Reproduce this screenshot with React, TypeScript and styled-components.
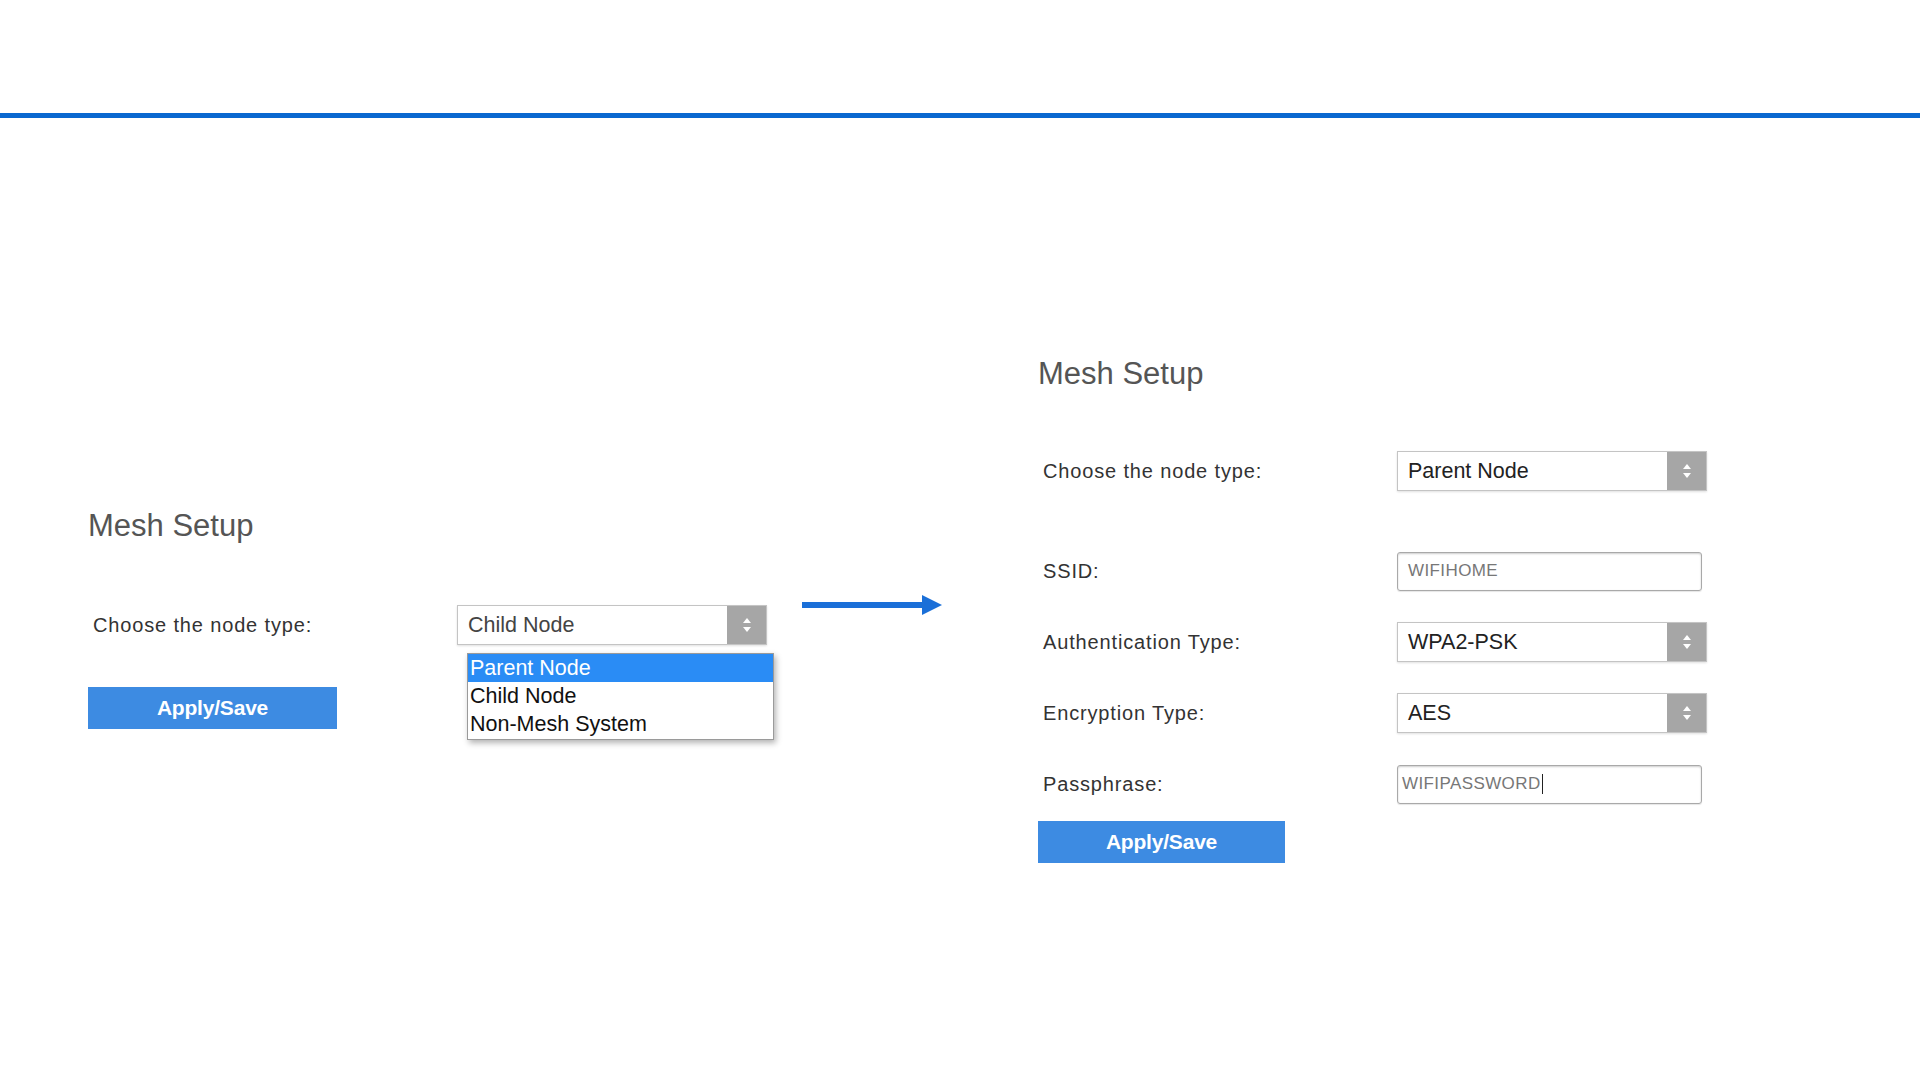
import React from 'react';
import styled, { createGlobalStyle } from 'styled-components';

const GlobalStyle = createGlobalStyle`
    html, body {
        margin: 0;
        padding: 0;
        background: #ffffff;
        font-family: "Liberation Sans", Arial, sans-serif;
    }
`;

const Page = styled.div`
    width: 1920px;
    height: 1080px;
    overflow: hidden;
    background: #ffffff;
`;

const TopBar = styled.div`
    height: 113px;
    border-bottom: 5px solid #0a68d0;
`;

const Content = styled.div`
    display: flex;
    align-items: flex-start;
`;

const Panel = styled.div<{ $top: number; $left: number; $labelWidth: number }>`
    display: flex;
    flex-direction: column;
    padding-top: ${({ $top }) => $top}px;
    margin-left: ${({ $left }) => $left}px;
    --label-width: ${({ $labelWidth }) => $labelWidth}px;
`;

const Heading = styled.h2`
    margin: 0;
    font-size: 31px;
    line-height: 34px;
    font-weight: normal;
    color: #555555;
`;

const Row = styled.div<{ $gap: number }>`
    display: flex;
    align-items: center;
    height: 40px;
    margin-top: ${({ $gap }) => $gap}px;
`;

const Label = styled.div`
    width: var(--label-width);
    box-sizing: border-box;
    padding-left: 5px;
    font-size: 20px;
    letter-spacing: 0.85px;
    color: #333333;
`;

const SelectWrap = styled.div`
    position: relative;
`;

const SelectBox = styled.div`
    display: flex;
    align-items: stretch;
    width: 310px;
    height: 40px;
    box-sizing: border-box;
    border: 1px solid #c4c4c4;
    background: #ffffff;
    box-shadow: 0 1px 2px rgba(0, 0, 0, 0.12);
`;

const SelectText = styled.div<{ $dim?: boolean }>`
    flex: 1;
    display: flex;
    align-items: center;
    padding-left: 10px;
    font-size: 21.5px;
    color: ${({ $dim }) => ($dim ? '#444444' : '#222222')};
`;

const SpinButton = styled.div`
    width: 39px;
    background: #a6a6a6;
    display: flex;
    align-items: center;
    justify-content: center;
`;

const OptionList = styled.div`
    position: absolute;
    left: 10px;
    top: 48px;
    width: 307px;
    box-sizing: border-box;
    border: 1px solid #9a9a9a;
    background: #ffffff;
    box-shadow: 2px 3px 6px rgba(0, 0, 0, 0.3);
    padding: 0 0 1px;
`;

const Option = styled.div<{ $active?: boolean }>`
    height: 28px;
    line-height: 28px;
    padding-left: 2px;
    font-size: 21.5px;
    color: ${({ $active }) => ($active ? '#ffffff' : '#111111')};
    background: ${({ $active }) => ($active ? '#2a8cf5' : 'transparent')};
`;

const TextField = styled.div<{ $tight?: boolean }>`
    display: flex;
    align-items: center;
    width: 305px;
    height: 39px;
    box-sizing: border-box;
    border: 1px solid #a9a9a9;
    border-radius: 3px;
    box-shadow: inset 0 1px 2px rgba(0, 0, 0, 0.2), 0 1px 1px rgba(0, 0, 0, 0.1);
    padding-left: ${({ $tight }) => ($tight ? 4 : 10)}px;
    font-size: 17px;
    color: #777777;
    letter-spacing: 0.4px;
`;

const Caret = styled.span`
    display: inline-block;
    width: 1px;
    height: 20px;
    background: #222222;
    margin-left: 1px;
`;

const ApplyButton = styled.button<{ $gap: number; $width: number }>`
    margin-top: ${({ $gap }) => $gap}px;
    width: ${({ $width }) => $width}px;
    height: 42px;
    border: none;
    background: #3d8be2;
    color: #ffffff;
    font-family: "Liberation Sans", Arial, sans-serif;
    font-size: 21px;
    font-weight: bold;
    letter-spacing: -0.2px;
    cursor: pointer;
`;

const ArrowBox = styled.div`
    margin-left: 35px;
    margin-top: 477px;
    width: 140px;
    height: 20px;
`;

const Spin = () => (
    <svg width="10" height="20" viewBox="0 0 10 20">
        <polygon points="5,3 9,8 1,8" fill="#ffffff" />
        <polygon points="1,12 9,12 5,17" fill="#ffffff" />
    </svg>
);

const Select: React.FC<{ value: string; dim?: boolean; children?: React.ReactNode }> = ({ value, dim, children }) => (
    <SelectWrap>
        <SelectBox>
            <SelectText $dim={dim}>{value}</SelectText>
            <SpinButton>
                <Spin />
            </SpinButton>
        </SelectBox>
        {children}
    </SelectWrap>
);

const App: React.FC = () => {
    return (
        <Page>
            <GlobalStyle />
            <TopBar />
            <Content>
                {/* 왼쪽: 노드 선택 드롭다운 */}
                <Panel $top={391} $left={88} $labelWidth={369}>
                    <Heading>Mesh Setup</Heading>
                    <Row $gap={62}>
                        <Label>Choose the node type:</Label>
                        <Select value="Child Node" dim>
                            <OptionList>
                                <Option $active>Parent Node</Option>
                                <Option>Child Node</Option>
                                <Option>Non-Mesh System</Option>
                            </OptionList>
                        </Select>
                    </Row>
                    <ApplyButton $gap={42} $width={249}>Apply/Save</ApplyButton>
                </Panel>

                <ArrowBox>
                    <svg width="140" height="20" viewBox="0 0 140 20">
                        <rect x="0" y="7" width="124" height="6" fill="#1a6fd8" />
                        <polygon points="120,0 140,10 120,20" fill="#1a6fd8" />
                    </svg>
                </ArrowBox>

                {/* 오른쪽: Parent Node 설정 */}
                <Panel $top={239} $left={96} $labelWidth={359}>
                    <Heading>Mesh Setup</Heading>
                    <Row $gap={60}>
                        <Label>Choose the node type:</Label>
                        <Select value="Parent Node" />
                    </Row>
                    <Row $gap={60}>
                        <Label>SSID:</Label>
                        <TextField>WIFIHOME</TextField>
                    </Row>
                    <Row $gap={31}>
                        <Label>Authentication Type:</Label>
                        <Select value="WPA2-PSK" />
                    </Row>
                    <Row $gap={31}>
                        <Label>Encryption Type:</Label>
                        <Select value="AES" />
                    </Row>
                    <Row $gap={31}>
                        <Label>Passphrase:</Label>
                        <TextField $tight>
                            WIFIPASSWORD<Caret />
                        </TextField>
                    </Row>
                    <ApplyButton $gap={17} $width={247}>Apply/Save</ApplyButton>
                </Panel>
            </Content>
        </Page>
    );
};

export default App;
